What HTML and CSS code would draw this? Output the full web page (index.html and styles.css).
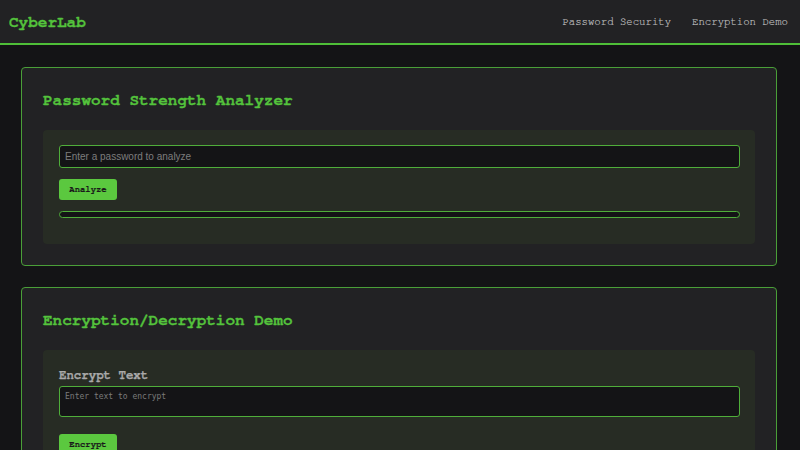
FILE: index.html
```html
<!DOCTYPE html>
<html lang="en">
<head>
<meta charset="utf-8">
<title>CyberLab</title>
<link rel="stylesheet" href="styles.css">
</head>
<body>
<header class="topbar">
  <div class="logo">CyberLab</div>
  <nav class="nav">
    <a href="#password" class="nav-link">Password Security</a>
    <a href="#encryption" class="nav-link">Encryption Demo</a>
  </nav>
</header>
<main class="main">
  <section class="card" id="password">
    <h2 class="card-title">Password Strength Analyzer</h2>
    <div class="panel">
      <input class="text-input" type="text" placeholder="Enter a password to analyze">
      <button class="btn">Analyze</button>
      <div class="meter"><div class="meter-fill"></div></div>
    </div>
  </section>
  <section class="card" id="encryption">
    <h2 class="card-title">Encryption/Decryption Demo</h2>
    <div class="panel">
      <label class="field-label">Encrypt Text</label>
      <textarea class="text-area" placeholder="Enter text to encrypt"></textarea>
      <button class="btn btn-encrypt">Encrypt</button>
    </div>
  </section>
</main>
</body>
</html>
```
FILE: styles.css
```css
* { box-sizing: border-box; }
html, body { margin: 0; padding: 0; }
body {
  background: #141416;
  color: #c8c8c8;
  font-family: "Nimbus Mono PS", "Nimbus Mono L", "FreeMono", "Courier 10 Pitch", Courier, "Courier New", monospace;
  overflow: hidden;
  height: 450px;
}
.topbar {
  height: 45px;
  background: #222224;
  border-bottom: 2px solid #4fbf38;
  display: flex;
  align-items: center;
  justify-content: space-between;
  padding: 0 12px 0 9px;
}
.logo {
  font-size: 16px;
  font-weight: bold;
  color: #54c33c;
  -webkit-text-stroke: 0.3px #54c33c;
}
.nav { display: flex; gap: 21px; }
.nav-link {
  font-size: 10.67px;
  color: #c4c4c4;
  text-decoration: none;
  -webkit-text-stroke: 0.15px #c4c4c4;
}
.main {
  padding: 22px 23px 0 21px;
  display: flex;
  flex-direction: column;
  gap: 21px;
}
.card {
  background: #222224;
  border: 1px solid #4a9f38;
  border-radius: 4px;
  padding: 21px;
}
.card-title {
  margin: 0 0 19px;
  font-size: 16px;
  line-height: 22px;
  font-weight: bold;
  color: #54c33c;
  -webkit-text-stroke: 0.3px #54c33c;
}
.panel {
  background: #272c24;
  border-radius: 4px;
  padding: 15px 15px 16px 16px;
  display: flex;
  flex-direction: column;
  align-items: flex-start;
}
.text-input {
  width: 100%;
  height: 23px;
  background: #141416;
  border: 1px solid #4fae3a;
  border-radius: 3px;
  padding: 0 5px;
  font-family: "Liberation Sans", Arial, sans-serif;
  font-size: 10px;
  color: #ddd;
  outline: none;
}
.text-input::placeholder { color: #7d7d7d; }
.btn {
  margin-top: 11px;
  background: #5bc83f;
  color: #1a1a1a;
  border: none;
  border-radius: 3px;
  height: 21px;
  padding: 0 10px;
  font-family: inherit;
  font-weight: bold;
  font-size: 8.9px;
  min-width: 58px;
  -webkit-text-stroke: 0.15px #1a1a1a;
}
.meter {
  margin-top: 11px;
  margin-bottom: 10px;
  width: 100%;
  height: 7px;
  border: 1px solid #4fae3a;
  border-radius: 4px;
  background: #141416;
}
.meter-fill { width: 0; height: 100%; }
.field-label {
  font-size: 12.4px;
  line-height: 19px;
  font-weight: bold;
  color: #a9a9a9;
  margin: 1px 0 1px;
  -webkit-text-stroke: 0.25px #a9a9a9;
}
.text-area {
  width: 100%;
  height: 31px;
  background: #141416;
  border: 1px solid #4fae3a;
  border-radius: 3px;
  padding: 5px;
  font-family: "DejaVu Sans Mono", monospace;
  font-size: 8px;
  color: #ddd;
  resize: none;
  outline: none;
  display: block;
}
.text-area::placeholder { color: #7a7a7a; }
.btn-encrypt { margin-top: 17px; }
```
